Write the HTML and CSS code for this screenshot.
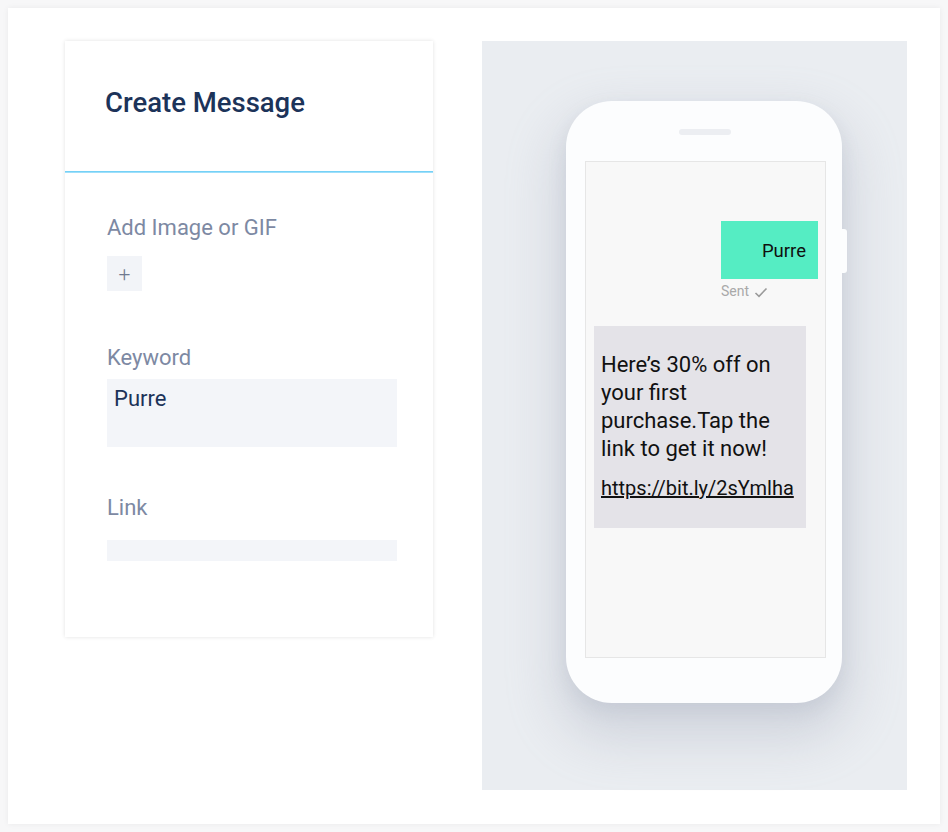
FILE: index.html
```html
<!DOCTYPE html>
<html>
<head>
<meta charset="utf-8">
<link rel="stylesheet" href="styles.css">
</head>
<body>
<div class="frame">
  <section class="editor">
    <header class="editor-head"><h1 class="title">Create Message</h1></header>
    <div class="divider"></div>
    <div class="editor-body">
      <div class="field">
        <div class="label">Add Image or GIF</div>
        <div class="add-btn">+</div>
      </div>
      <div class="field field-kw">
        <div class="label">Keyword</div>
        <div class="input input-tall">Purre</div>
      </div>
      <div class="field field-link">
        <div class="label">Link</div>
        <div class="input input-short"></div>
      </div>
    </div>
  </section>
  <section class="preview">
    <div class="phone">
      <div class="side-btn"></div>
      <div class="speaker"></div>
      <div class="screen">
        <div class="sent-wrap">
          <div class="bubble-out">Purre</div>
          <div class="sent">Sent <svg class="check" width="14" height="11" viewBox="0 0 14 11"><path d="M1.5 6 L5 9.3 L12.5 1.5" fill="none" stroke="#9a9a9a" stroke-width="1.6"/></svg></div>
        </div>
        <div class="bubble-in">
          <p class="msg">Here’s 30% off on your first purchase.Tap the link to get it now!</p>
          <p class="link">https://bit.ly/2sYmlha</p>
        </div>
      </div>
    </div>
  </section>
</div>
</body>
</html>
```
FILE: styles.css
```css
* { box-sizing: border-box; }
html, body { margin: 0; padding: 0; }
body {
  background: #f7f7f8;
  width: 948px;
  height: 832px;
  padding: 8px;
  font-family: Roboto, "Liberation Sans", sans-serif;
}
.frame {
  width: 932px;
  height: 816px;
  background: #ffffff;
  box-shadow: 0 0 6px rgba(0,0,0,0.06);
  display: flex;
  align-items: flex-start;
  padding: 33px 0 0 57px;
}
.editor {
  width: 368px;
  height: 596px;
  background: #fff;
  box-shadow: 0 0 4px rgba(0,0,0,0.12);
}
.editor-head {
  height: 130px;
  padding: 45px 0 0 40px;
}
.divider {
  height: 2px;
  background: linear-gradient(#5fcaf6, #b5e6fb);
}
.title {
  margin: 0;
  font-size: 27.5px;
  font-weight: 500;
  color: #1c3359;
  line-height: 34px;
}
.editor-body {
  padding: 41px 35px 0 42px;
}
.label {
  font-size: 22px;
  color: #7d89a3;
  line-height: 28px;
}
.add-btn {
  margin-top: 14px;
  width: 35px;
  height: 35px;
  background: #f2f4f8;
  color: #6f7a90;
  font-size: 21px;
  font-weight: 300;
  display: flex;
  align-items: center;
  justify-content: center;
}
.field-kw { margin-top: 53px; }
.input {
  margin-top: 7px;
  width: 290px;
  background: #f3f5f9;
}
.input-tall {
  height: 68px;
  padding: 6px 0 0 7px;
  font-size: 22px;
  color: #1c3359;
  line-height: 28px;
}
.field-link { margin-top: 47px; }
.input-short { height: 21px; margin-top: 18px; }

.preview {
  margin-left: 49px;
  width: 425px;
  height: 749px;
  background: #eaedf1;
  display: flex;
  justify-content: flex-start;
  padding: 60px 0 0 84px;
}
.phone {
  position: relative;
  width: 276px;
  height: 602px;
  background: #fcfdfe;
  border-radius: 46px;
  box-shadow: 0 26px 50px 10px rgba(155,163,180,0.32), 0 8px 18px rgba(155,163,180,0.20);
  display: flex;
  flex-direction: column;
  align-items: flex-start;
  padding-top: 28px;
}
.side-btn {
  position: absolute;
  right: -5px;
  top: 128px;
  width: 6px;
  height: 44px;
  background: #fcfdfe;
  border-radius: 0 3px 3px 0;
}
.speaker {
  margin-left: 113px;
  width: 52px;
  height: 6px;
  border-radius: 3px;
  background: #eceef2;
}
.screen {
  margin-top: 26px;
  margin-left: 19px;
  width: 241px;
  height: 497px;
  background: #f8f8f8;
  border: 1px solid #e6e6e6;
  display: flex;
  flex-direction: column;
  padding: 59px 8px 0 8px;
}
.sent-wrap {
  align-self: flex-end;
  margin-right: -1px;
  width: 97px;
}
.bubble-out {
  height: 58px;
  background: #55edc3;
  color: #0f0f0f;
  font-size: 18.5px;
  text-align: right;
  padding: 19px 12px 0 0;
  line-height: 22px;
}
.sent {
  margin-top: 3px;
  font-size: 14px;
  color: #a9a9a9;
  line-height: 18px;
  display: flex;
  align-items: center;
  gap: 5px;
}
.check { margin-top: 2px; }
.bubble-in {
  margin-top: 26px;
  width: 212px;
  height: 202px;
  background: #e4e3e8;
  padding: 25px 4px 0 7px;
  color: #111;
}
.msg {
  margin: 0;
  font-size: 22px;
  line-height: 28px;
}
.link {
  margin: 12px 0 0 0;
  font-size: 20px;
  line-height: 26px;
  text-decoration: underline;
  white-space: nowrap;
  overflow: hidden;
}
```
